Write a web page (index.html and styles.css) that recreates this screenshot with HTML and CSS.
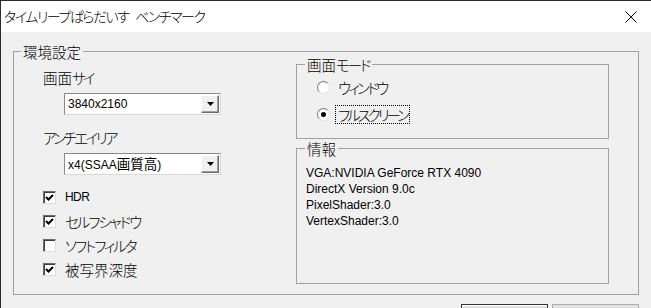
FILE: index.html
```html
<!DOCTYPE html>
<html lang="ja">
<head>
  <meta charset="UTF-8" />
  <title>タイムリープぱらだいす ベンチマーク</title>
  <link rel="stylesheet" href="styles.css">
</head>
<body>
  <div class="window">
    <div class="titlebar">
      <span class="title">タイムリープぱらだいす ベンチマーク</span>
      <svg class="close" width="12" height="12" viewBox="0 0 12 12">
        <path d="M0.5 0.5 L11.5 11.5 M11.5 0.5 L0.5 11.5" stroke="#000" stroke-width="1" fill="none"/>
      </svg>
    </div>

    <div class="client">
      <fieldset class="group outer">
        <legend>環境設定</legend>
        <div class="cols">

          <!-- 左側: 画面サイズ / AA / チェック -->
          <div class="left-col">
            <div class="field-label">画面<span class="kana tight">サイ</span></div>
            <div class="combo">
              <span class="combo-text">3840x2160</span>
              <span class="combo-btn">
                <svg width="7" height="4" viewBox="0 0 7 4"><polygon points="0,0 7,0 3.5,4" fill="#000"/></svg>
              </span>
            </div>

            <div class="field-label second kana narrow">アンチエイリア</div>
            <div class="combo">
              <span class="combo-text">x4(SSAA<span class="jp">画質高</span>)</span>
              <span class="combo-btn">
                <svg width="7" height="4" viewBox="0 0 7 4"><polygon points="0,0 7,0 3.5,4" fill="#000"/></svg>
              </span>
            </div>

            <ul class="checks">
              <li>
                <span class="checkbox"><svg width="9" height="9" viewBox="0 0 9 9"><path d="M1 4 L3.5 6.5 L8 2" stroke="#000" stroke-width="2" fill="none"/></svg></span>
                <span class="latin">HDR</span>
              </li>
              <li>
                <span class="checkbox"><svg width="9" height="9" viewBox="0 0 9 9"><path d="M1 4 L3.5 6.5 L8 2" stroke="#000" stroke-width="2" fill="none"/></svg></span>
                <span class="kana">セルフシャドウ</span>
              </li>
              <li>
                <span class="checkbox"></span>
                <span class="kana">ソフトフィルタ</span>
              </li>
              <li>
                <span class="checkbox"><svg width="9" height="9" viewBox="0 0 9 9"><path d="M1 4 L3.5 6.5 L8 2" stroke="#000" stroke-width="2" fill="none"/></svg></span>
                <span>被写界深度</span>
              </li>
            </ul>
          </div>

          <!-- 右側: モード / 情報 -->
          <div class="right-col">
            <fieldset class="group mode">
              <legend>画面<span class="kana">モード</span></legend>
              <div class="radios">
                <div class="radio-row">
                  <span class="radio"></span>
                  <span class="radio-label kana narrow">ウィンドウ</span>
                </div>
                <div class="radio-row">
                  <span class="radio on"></span>
                  <span class="radio-label kana tight focus">フルスクリーン</span>
                </div>
              </div>
            </fieldset>

            <fieldset class="group info">
              <legend>情報</legend>
              <div class="info-text">
                <div>VGA:NVIDIA GeForce RTX 4090</div>
                <div>DirectX Version 9.0c</div>
                <div>PixelShader:3.0</div>
                <div>VertexShader:3.0</div>
              </div>
            </fieldset>
          </div>

        </div>
      </fieldset>

      <div class="buttons">
        <button class="btn default"></button>
        <button class="btn"></button>
      </div>
    </div>
  </div>
</body>
</html>
```

FILE: styles.css
```css
/* RESET */
* {
  margin: 0;
  padding: 0;
  box-sizing: border-box;
}

html, body {
  height: 100%;
}

body {
  background: #f0f0f0;
  overflow: hidden;
  font-family: "Noto Sans CJK JP", sans-serif;
  font-weight: 300;
  color: #000;
}

.window {
  height: 100%;
  border-top: 1px solid #2b2b2b;
  border-left: 1px solid #2b2b2b;
  display: flex;
  flex-direction: column;
}

/* タイトルバー */
.titlebar {
  height: 31px;
  background: #fff;
  display: flex;
  align-items: center;
  padding: 0 14px 0 3px;
}

.title {
  font-size: 14px;
  line-height: 31px;
  letter-spacing: -1.5px;
  word-spacing: 5px;
  font-feature-settings: "palt";
}

.close {
  margin-left: auto;
}

.client {
  flex: 1;
  padding: 14px 12px 0 12px;
}

/* カナは Yu Gothic UI 並みに詰める */
.kana {
  letter-spacing: -2px;
}

.kana.tight {
  letter-spacing: -3px;
}

.kana.narrow {
  letter-spacing: -2.6px;
}

/* グループボックス */
.group {
  border: 1px solid #a0a0a0;
  margin: 0;
  padding: 0;
  min-width: 0;
}

.group legend {
  padding: 0 2px;
  margin-left: 8px;
  font-size: 14.5px;
  line-height: 15px;
  font-feature-settings: "palt";
}

.outer {
  height: 249px;
}

.outer > legend {
  line-height: 11px;
  margin-left: 7px;
}

.cols {
  display: grid;
  grid-template-columns: 282px 313px;
}

.left-col {
  padding: 13px 0 0 29px;
  font-size: 14.5px;
  font-feature-settings: "palt";
}

.field-label {
  line-height: 16px;
}

.field-label.second {
  margin-top: 15px;
}

/* コンボボックス */
.combo {
  margin: 7px 0 0 21px;
  width: 157px;
  height: 22px;
  background: #fff;
  border: 1px solid;
  border-color: #8a8a8a #d8d8d8 #d8d8d8 #8a8a8a;
  padding: 1px;
  display: flex;
  align-items: center;
}

.combo-text {
  flex: 1;
  padding-left: 2px;
  font-family: "Liberation Sans", "Noto Sans CJK JP", sans-serif;
  font-weight: 400;
  font-size: 12px;
  line-height: 18px;
}

.combo-text .jp {
  font-family: "Noto Sans CJK JP", sans-serif;
  font-size: 13.5px;
}

.combo-btn {
  width: 18px;
  height: 18px;
  background: #f0f0f0;
  border: 1px solid;
  border-color: #fff #696969 #696969 #fff;
  box-shadow: inset -1px -1px 0 #a0a0a0;
  display: flex;
  align-items: center;
  justify-content: center;
}

/* チェックボックス */
.checks {
  list-style: none;
  margin-top: 10px;
}

.checks li {
  height: 24px;
  display: flex;
  align-items: center;
  gap: 9px;
}

.checkbox {
  width: 13px;
  height: 13px;
  background: #fff;
  border: 1px solid;
  border-color: #6d6d6d #dcdcdc #dcdcdc #6d6d6d;
  box-shadow: inset 1px 1px 0 #404040;
  display: flex;
  align-items: center;
  justify-content: center;
}

.latin {
  font-family: "Liberation Sans", sans-serif;
  font-weight: 400;
  font-size: 12px;
  letter-spacing: -0.6px;
}

/* 画面モード */
.right-col {
  display: flex;
  flex-direction: column;
}

.mode {
  height: 82px;
}

.radios {
  padding: 6px 0 0 20px;
}

.radio-row {
  height: 18px;
  display: flex;
  align-items: center;
  gap: 6px;
  margin-bottom: 9px;
  font-size: 14.5px;
  font-feature-settings: "palt";
}

.radio {
  width: 13px;
  height: 13px;
  border-radius: 50%;
  background: #fff;
  border: 1px solid;
  border-color: #7a7a7a #e3e3e3 #e3e3e3 #7a7a7a;
  display: flex;
  align-items: center;
  justify-content: center;
}

.radio.on::after {
  content: "";
  width: 5px;
  height: 5px;
  border-radius: 50%;
  background: #000;
}

.radio-label {
  padding: 0 2px;
  line-height: 17px;
}

.radio-label.focus {
  outline: 1px dotted #000;
}

/* 情報 */
.info {
  margin-top: 2px;
  height: 143px;
}

.info-text {
  padding: 9px 0 0 9px;
  font-family: "Liberation Sans", sans-serif;
  font-weight: 400;
  font-size: 12px;
  line-height: 16px;
}

/* ボタン */
.buttons {
  margin-top: 9px;
  display: flex;
  justify-content: flex-end;
  gap: 4px;
}

.btn {
  width: 87px;
  height: 23px;
  background: #e1e1e1;
  border: 1px solid #adadad;
}

.btn.default {
  border-color: #333;
  box-shadow: inset 1px 1px 0 #fff;
}
```
